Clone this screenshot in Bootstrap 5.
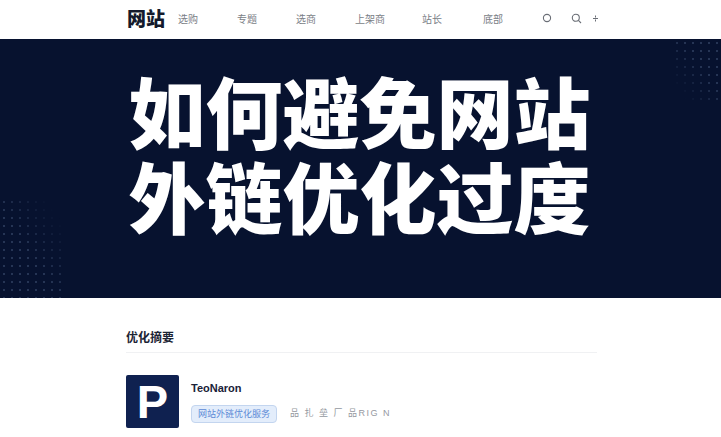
<!DOCTYPE html>
<html lang="zh-CN">
<head>
  <meta charset="UTF-8" />
  <meta name="viewport" content="width=device-width, initial-scale=1" />
  <title>如何避免网站外链优化过度</title>
  <link href="https://cdn.jsdelivr.net/npm/bootstrap@5.3.0/dist/css/bootstrap.min.css" rel="stylesheet" />
  <style>
    html, body {
      height: 437px;
      overflow: hidden;
    }
    body {
      background: #fff;
      font-family: "Liberation Sans", "Noto Sans CJK SC", sans-serif;
    }
    .top-bar {
      height: 39px;
      padding: 0 0 3px 127px;
    }
    .site-logo {
      width: 51px;
      font-size: 19px;
      font-weight: 900;
      color: #141a2c;
      font-family: "Noto Sans CJK SC", sans-serif;
    }
    .top-link {
      font-size: 10px;
      color: #7a7e86;
      text-decoration: none;
      padding: 0;
    }
    .link-slot { width: 59px; }
    .link-slot-wide { width: 67px; }
    .link-slot-end { width: 61px; }
    .top-icons { color: #6a6e76; margin-left: -2px; }
    .search-ico { margin-left: 19px; }
    .spark-ico { margin-left: 10px; }
    .hero-band {
      height: 259px;
      background: #07122f;
      padding-top: 28px;
    }
    .hero-title {
      margin: 0;
      color: #fff;
      font-family: "Noto Sans CJK SC", sans-serif;
      font-size: 77px;
      font-weight: 900;
      line-height: 85px;
      text-align: center;
      padding-right: 2px;
    }
    .dots-left, .dots-right {
      position: absolute;
      background-image: radial-gradient(#263555 1px, transparent 1.4px);
      background-size: 8px 8px;
    }
    .dots-left {
      left: 0;
      bottom: 0;
      width: 66px;
      height: 100px;
      -webkit-mask-image: linear-gradient(to top right, #000 45%, transparent 85%);
      mask-image: linear-gradient(to top right, #000 45%, transparent 85%);
    }
    .dots-right {
      right: 0;
      top: 0;
      width: 48px;
      height: 64px;
      -webkit-mask-image: linear-gradient(to bottom left, #000 40%, transparent 85%);
      mask-image: linear-gradient(to bottom left, #000 40%, transparent 85%);
    }
    .summary-wrap {
      padding: 30px 124px 0 126px;
    }
    .summary-head {
      font-size: 12px;
      font-weight: 700;
      color: #1c2434;
      line-height: 18px;
      padding-bottom: 6px;
      border-bottom: 1px solid #f0f1f3;
      margin-bottom: 22px;
      font-family: "Noto Sans CJK SC", sans-serif;
    }
    .brand-tile {
      width: 53px;
      height: 53px;
      background: #0f2150;
      color: #fff;
      font-size: 47px;
      font-weight: 700;
      line-height: 1;
      border-radius: 2px;
    }
    .brand-name {
      font-size: 11px;
      font-weight: 700;
      color: #1a2238;
      line-height: 14px;
      margin: 6px 0 10px;
    }
    .tag-pill {
      width: 86px;
      height: 18px;
      font-size: 9px;
      line-height: 16px;
      color: #5c8ad6;
      background: #e3edfb;
      border: 1px solid #c3d5ef;
      border-radius: 4px;
      text-align: center;
    }
    .tag-meta {
      font-size: 9px;
      color: #9498a0;
      letter-spacing: 1.5px;
      margin-left: 13px;
    }
  </style>
</head>
<body>
  <nav class="top-bar d-flex align-items-center">
    <div class="site-logo">网站</div>
    <div class="link-slot"><a class="top-link" href="#">选购</a></div>
    <div class="link-slot"><a class="top-link" href="#">专题</a></div>
    <div class="link-slot"><a class="top-link" href="#">选商</a></div>
    <div class="link-slot-wide"><a class="top-link" href="#">上架商</a></div>
    <div class="link-slot-end"><a class="top-link" href="#">站长</a></div>
    <div class="link-slot-end"><a class="top-link" href="#">底部</a></div>
    <div class="top-icons d-flex align-items-center">
      <svg width="10" height="10" viewBox="0 0 10 10" fill="none" stroke="currentColor" stroke-width="1.1"><circle cx="5" cy="5" r="3.6"/></svg>
      <svg class="search-ico" width="11" height="11" viewBox="0 0 11 11" fill="none" stroke="currentColor" stroke-width="1.1"><circle cx="4.8" cy="4.8" r="3.5"/><path d="M7.4 7.4 10 10"/></svg>
      <svg class="spark-ico" width="7" height="7" viewBox="0 0 7 7" fill="none" stroke="currentColor" stroke-width="1"><path d="M3.5 .5v2M1 3.5h5M3.5 4.5v2"/></svg>
    </div>
  </nav>

  <header class="hero-band position-relative overflow-hidden">
    <span class="dots-left"></span>
    <span class="dots-right"></span>
    <h1 class="hero-title position-relative">如何避免网站<br />外链优化过度</h1>
  </header>

  <section class="summary-wrap">
    <div class="summary-head">优化摘要</div>
    <div class="d-flex">
      <div class="brand-tile d-flex align-items-center justify-content-center flex-shrink-0">P</div>
      <div class="ms-2 ps-1">
        <div class="brand-name">TeoNaron</div>
        <div class="d-flex align-items-center">
          <span class="tag-pill">网站外链优化服务</span>
          <span class="tag-meta">品 扎 垒 厂 品RIG N</span>
        </div>
      </div>
    </div>
  </section>

  <script src="https://cdn.jsdelivr.net/npm/bootstrap@5.3.0/dist/js/bootstrap.bundle.min.js"></script>
</body>
</html>
